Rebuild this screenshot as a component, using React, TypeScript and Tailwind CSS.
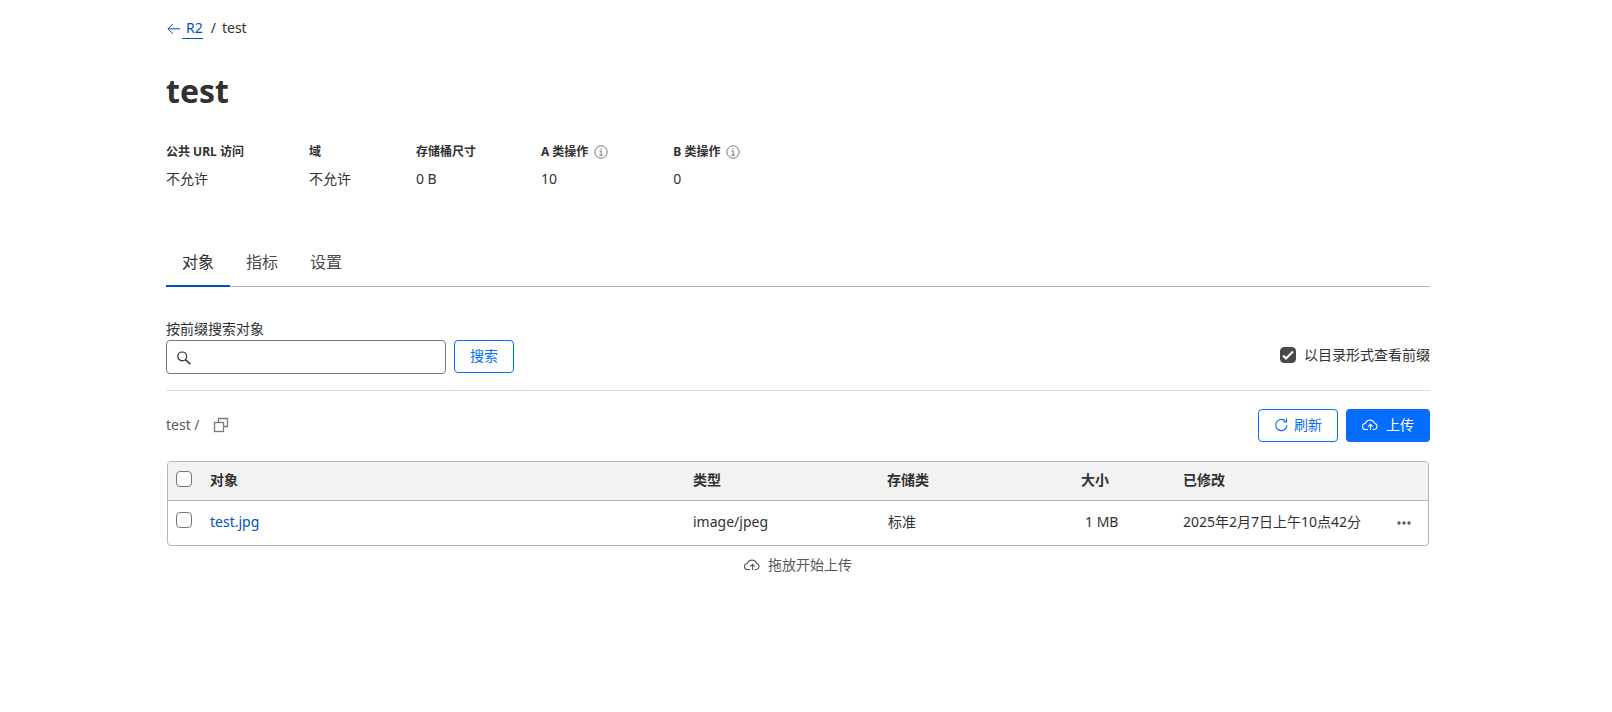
import { useState } from 'react'
import type { ReactNode } from 'react'

const stats = [
  { label: '公共 URL 访问', value: '不允许', info: false },
  { label: '域', value: '不允许', info: false },
  { label: '存储桶尺寸', value: '0 B', info: false },
  { label: 'A 类操作', value: '10', info: true },
  { label: 'B 类操作', value: '0', info: true },
]

const tabs = ['对象', '指标', '设置']

const objects = [
  { name: 'test.jpg', type: 'image/jpeg', storage: '标准', size: '1 MB', modified: '2025年2月7日上午10点42分' },
]

function ArrowLeftIcon() {
  return (
    <svg width="16" height="16" viewBox="0 0 16 16" fill="none" stroke="currentColor" aria-hidden="true">
      <path d="M14 8.8H2M7 3.8l-5 5 5 5" />
    </svg>
  )
}

function InfoIcon() {
  return (
    <svg width="14" height="14" viewBox="0 0 14 14" fill="none" stroke="#797979" aria-hidden="true">
      <circle cx="7" cy="7" r="6.2" />
      <path d="M5.5 5.9H7.2V10M5.3 10.2h3.6M6.4 3.8h1.2" />
    </svg>
  )
}

function SearchIcon() {
  return (
    <svg width="16" height="16" viewBox="0 0 16 16" fill="none" stroke="#313131" strokeWidth="1.2" aria-hidden="true">
      <circle cx="7.2" cy="7.4" r="4.4" />
      <path d="M10.4 10.6l5 4.600" strokeWidth="1.5" />
    </svg>
  )
}

function CopyIcon() {
  return (
    <svg width="16" height="16" viewBox="0 0 16 16" fill="none" stroke="#797979" strokeWidth="1.3" aria-hidden="true">
      <path d="M5.5 5V1.5h9v8H11" />
      <rect x="1.5" y="5.5" width="9" height="9" />
    </svg>
  )
}

function RefreshIcon() {
  return (
    <svg width="14" height="14" viewBox="0 0 14 14" fill="none" stroke="currentColor" strokeWidth="1.1" aria-hidden="true">
      <path d="M12.9 7.2A5.6 5.6 0 1 1 11.4 3.2M12.5 .8v3.2H9.2" />
    </svg>
  )
}

function CloudUploadIcon() {
  return (
    <svg width="16" height="16" viewBox="0 0 16 16" fill="none" stroke="currentColor" strokeWidth="1.1" aria-hidden="true">
      <path d="M6 12.5H3.6a3 3 0 0 1-.3-6A4.9 4.9 0 0 1 12.6 6.4a3.1 3.1 0 0 1-.3 6.1H10.5" />
      <path d="M8.5 13V7.500M6.2 9.7l2.3-2.3 2.3 2.3" />
    </svg>
  )
}

function DotsIcon() {
  return (
    <svg width="14" height="4" viewBox="0 0 14 4" fill="#595959" aria-hidden="true">
      <circle cx="2" cy="2" r="1.7" />
      <circle cx="7" cy="2" r="1.7" />
      <circle cx="12" cy="2" r="1.7" />
    </svg>
  )
}

function Checkbox({ id, label, checked, onChange }: { id: string; label: string; checked: boolean; onChange: () => void }) {
  return (
    <span className="relative inline-flex size-4 shrink-0">
      <input
        id={id}
        type="checkbox"
        aria-label={label}
        checked={checked}
        onChange={onChange}
        className="size-4 appearance-none rounded border border-[#797979] bg-white checked:border-[#4a4a4a] checked:bg-[#4a4a4a]"
      />
      {checked && (
        <svg className="pointer-events-none absolute inset-0" width="16" height="16" viewBox="0 0 16 16" fill="none" stroke="#fff" strokeWidth="2" aria-hidden="true">
          <path d="M3 8.5l3 3L13 4.5" />
        </svg>
      )}
    </span>
  )
}

function OutlineButton({ children }: { children: ReactNode }) {
  return (
    <button type="button" className="flex h-[33px] items-center gap-1.5 rounded-sm border border-[#056dff] bg-white px-[15px] pb-px text-[#056dff]">
      {children}
    </button>
  )
}

export default function App() {
  const [active, setActive] = useState('对象')
  const [asDirectory, setAsDirectory] = useState(true)
  const [selected, setSelected] = useState<string[]>([])
  const allSelected = selected.length === objects.length

  const toggle = (name: string) =>
    setSelected(selected.includes(name) ? selected.filter((n) => n !== name) : [...selected, name])

  return (
    <div className="bg-white pr-4 font-['Noto_Sans','Noto_Sans_CJK_SC',sans-serif] text-sm text-[#313131]">
      <main className="mx-auto max-w-[1264px] pt-4">
        <nav className="flex h-6 items-center">
          <a href="#r2" className="flex items-center text-[#0051c3]">
            <ArrowLeftIcon />
            <span className="border-b border-[#0051c3] pl-1 leading-5">R2</span>
          </a>
          <span className="ml-2 flex gap-1.5">
            <span>/</span>
            <span>test</span>
          </span>
        </nav>

        <h1 className="mt-8 text-[32px] leading-[38px] font-bold">test</h1>

        <dl className="mt-[34px] flex flex-wrap gap-[65px]">
          {stats.map(({ label, value, info }) => (
            <div key={label}>
              <dt className="flex items-center gap-1.5 text-xs leading-4 font-bold">
                {label}
                {info && <InfoIcon />}
              </dt>
              <dd className="mt-2 leading-[22px]">{value}</dd>
            </div>
          ))}
        </dl>

        <div role="tablist" className="mt-12 flex border-b border-[#b6b6b6] text-base">
          {tabs.map((tab) => (
            <button
              key={tab}
              type="button"
              role="tab"
              aria-selected={active === tab}
              onClick={() => setActive(tab)}
              className={active === tab ? '-mb-px h-[49px] border-b-2 border-[#0051c3] px-4' : '-mb-px h-[49px] border-b-2 border-transparent px-4 text-[#4a4a4a]'}
            >
              {tab}
            </button>
          ))}
        </div>

        <div className="mt-8 flex items-end justify-between border-b border-[#d9d9d9] pb-4">
          <form onSubmit={(e) => e.preventDefault()}>
            <label htmlFor="prefix" className="block pb-px leading-5">按前缀搜索对象</label>
            <div className="flex gap-2">
              <div className="flex h-[34px] w-[280px] items-center rounded border border-[#797979] pl-2">
                <SearchIcon />
                <input id="prefix" type="text" className="ml-2 min-w-0 flex-1 outline-none" />
              </div>
              <OutlineButton>搜索</OutlineButton>
            </div>
          </form>
          <label htmlFor="directory" className="flex items-center gap-2 pb-[9px]">
            <Checkbox id="directory" label="以目录形式查看前缀" checked={asDirectory} onChange={() => setAsDirectory(!asDirectory)} />
            以目录形式查看前缀
          </label>
        </div>

        <div className="mt-[18px] flex items-center justify-between">
          <div className="flex items-center gap-[13px] pb-px text-[#595959]">
            <span>test /</span>
            <button type="button" aria-label="复制"><CopyIcon /></button>
          </div>
          <div className="flex gap-2">
            <OutlineButton>
              <RefreshIcon />
              刷新
            </OutlineButton>
            <button type="button" className="flex h-[33px] items-center gap-2 rounded-sm bg-[#056dff] px-4 pb-px text-white">
              <CloudUploadIcon />
              上传
            </button>
          </div>
        </div>

        <div className="mx-px mt-[19px] overflow-hidden rounded border border-[#b6b6b6]">
          <table className="w-full table-fixed text-left">
            <thead>
              <tr className="h-[38px] border-b border-[#b6b6b6] bg-[#f2f2f2]">
                <th className="w-[42px] pt-[9px] pl-2 align-top">
                  <span className="flex">
                    <Checkbox id="all" label="全选" checked={allSelected} onChange={() => setSelected(allSelected ? [] : objects.map((o) => o.name))} />
                  </span>
                </th>
                <th className="pb-px font-bold">对象</th>
                <th className="w-[194px] pb-px font-bold">类型</th>
                <th className="w-[194px] pb-px font-bold">存储类</th>
                <th className="w-[102px] pb-px font-bold">大小</th>
                <th className="w-[214px] pb-px font-bold">已修改</th>
                <th className="w-[31px]" />
              </tr>
            </thead>
            <tbody>
              {objects.map((o) => (
                <tr key={o.name} className="h-[45px]">
                  <td className="pt-[11px] pl-2 align-top">
                    <span className="flex">
                      <Checkbox id={o.name} label={o.name} checked={selected.includes(o.name)} onChange={() => toggle(o.name)} />
                    </span>
                  </td>
                  <td className="pb-0.5"><a href="#test.jpg" className="text-[#0051c3]">{o.name}</a></td>
                  <td className="pb-0.5">{o.type}</td>
                  <td className="pb-0.5 pl-px">{o.storage}</td>
                  <td className="pb-0.5 pl-1">{o.size}</td>
                  <td className="pb-0.5">{o.modified}</td>
                  <td>
                    <button type="button" aria-label="更多" className="flex"><DotsIcon /></button>
                  </td>
                </tr>
              ))}
            </tbody>
          </table>
        </div>

        <p className="mt-2 flex items-center justify-center gap-2 leading-[22px] text-[#595959]">
          <CloudUploadIcon />
          拖放开始上传
        </p>
      </main>
    </div>
  )
}
